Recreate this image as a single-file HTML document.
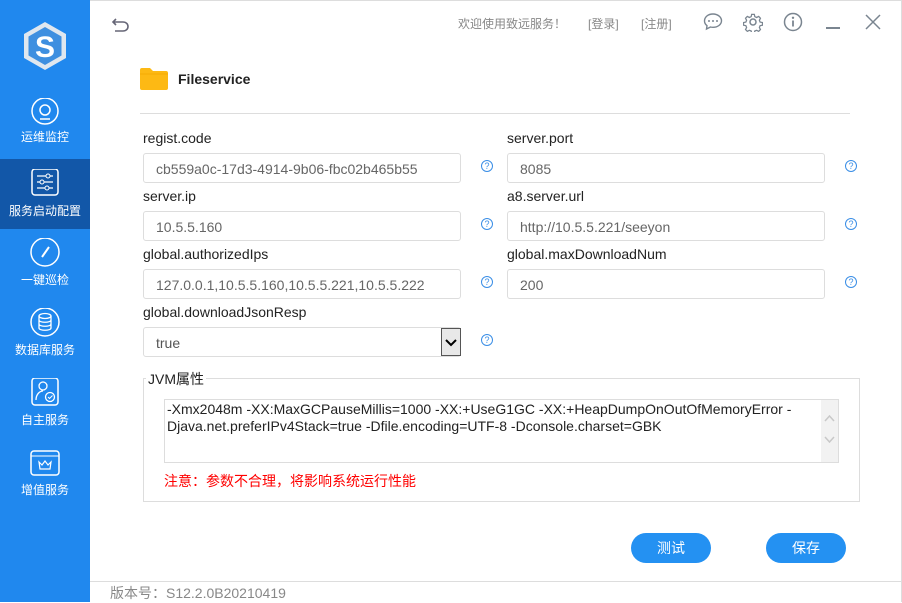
<!DOCTYPE html>
<html><head><meta charset="utf-8"><style>
*{margin:0;padding:0;box-sizing:border-box}
body{width:902px;height:602px;position:relative;background:#fff;font-family:"Liberation Sans","Noto Sans CJK SC",sans-serif;overflow:hidden}
.side{position:absolute;left:0;top:0;width:90px;height:602px;background:#2088ee}
.item{position:absolute;left:0;width:90px;height:70px;color:#fff;font-size:12px;text-align:center}
.item svg{position:absolute;left:27px;top:10px}
.item span{position:absolute;left:0;right:0;top:38px;white-space:nowrap}
.active{background:#1257a8}
.a{position:absolute}
.lbl{position:absolute;font-size:14px;color:#222}
.inp{position:absolute;height:30px;border:1px solid #ddd;border-radius:3px;font-size:14px;color:#666;padding:7px 12px;width:318px;white-space:nowrap;overflow:hidden}
.q{position:absolute;width:12px;height:12px;border:1.2px solid #3a8ee6;border-radius:50%;color:#3a8ee6;font-size:9px;line-height:10px;text-align:center}
.btn{position:absolute;width:80px;height:30px;border-radius:15px;background:#2491f2;color:#fff;font-size:14px;text-align:center;line-height:30px;top:533px}
</style></head><body>
<div class="a" style="left:90px;top:0;width:812px;height:1px;background:#ddd"></div>
<div class="a" style="left:901px;top:0;width:1px;height:602px;background:#ddd"></div>
<div class="side">
<svg class="a" style="left:22px;top:21px" width="46" height="50" viewBox="0 0 46 50"><polygon points="23,1 44,13 44,37 23,49 2,37 2,13" fill="#dfe7ef"/><polygon points="23,6 39.5,15.5 39.5,34.5 23,44 6.5,34.5 6.5,15.5" fill="#3e8fe0"/><text x="23" y="36" font-size="30" font-weight="bold" fill="#fff" text-anchor="middle" font-family="Liberation Sans">S</text></svg>
<div class="item" style="top:88px"><svg width="36" height="28" viewBox="0 0 36 28"><circle cx="18" cy="13" r="13" fill="none" stroke="#fff" stroke-width="1.5"/><circle cx="18" cy="12" r="5" fill="none" stroke="#fff" stroke-width="1.5"/><path d="M13 21h10" stroke="#fff" stroke-width="1.5"/></svg><span style="top:40px">运维监控</span></div>
<div class="item active" style="top:159px"><svg width="36" height="28" viewBox="0 0 36 28"><rect x="5" y="0" width="26" height="26" rx="3" fill="none" stroke="#fff" stroke-width="1.5"/><path d="M10 7h16M10 13h16M10 19h16" stroke="#fff" stroke-width="1.2"/><circle cx="21" cy="7" r="2" fill="#1257a8" stroke="#fff"/><circle cx="15" cy="13" r="2" fill="#1257a8" stroke="#fff"/><circle cx="20" cy="19" r="2" fill="#1257a8" stroke="#fff"/></svg><span style="top:43px">服务启动配置</span></div>
<div class="item" style="top:228px"><svg width="36" height="30" viewBox="0 0 36 30"><circle cx="18" cy="14" r="14" fill="none" stroke="#fff" stroke-width="1.5"/><path d="M15 19l7-10" stroke="#fff" stroke-width="2"/></svg><span style="top:43px">一键巡检</span></div>
<div class="item" style="top:298px"><svg width="36" height="30" viewBox="0 0 36 30"><circle cx="18" cy="14" r="14" fill="none" stroke="#fff" stroke-width="1.5"/><ellipse cx="18" cy="8" rx="6" ry="2.5" fill="none" stroke="#fff" stroke-width="1.3"/><path d="M12 8v12c0 3 12 3 12 0V8M12 12c0 3 12 3 12 0M12 16c0 3 12 3 12 0" fill="none" stroke="#fff" stroke-width="1.3"/></svg><span style="top:43px">数据库服务</span></div>
<div class="item" style="top:368px"><svg width="36" height="30" viewBox="0 0 36 30"><rect x="5" y="0" width="26" height="27" rx="3" fill="none" stroke="#fff" stroke-width="1.5"/><circle cx="16" cy="8" r="4" fill="none" stroke="#fff" stroke-width="1.3"/><path d="M9 22c0-6 4-9 7-9" fill="none" stroke="#fff" stroke-width="1.3"/><circle cx="23" cy="19" r="4.5" fill="none" stroke="#fff" stroke-width="1.3"/><path d="M21 19l1.5 1.5 3-3" fill="none" stroke="#fff"/></svg><span style="top:43px">自主服务</span></div>
<div class="item" style="top:438px"><svg width="36" height="30" viewBox="0 0 36 30"><rect x="4" y="3" width="28" height="24" rx="3" fill="none" stroke="#fff" stroke-width="1.5"/><path d="M4 8h28" stroke="#fff"/><path d="M12 14l3 3 3-4 3 4 3-3-1 7h-10z" fill="none" stroke="#fff" stroke-width="1.2"/></svg><span style="top:43px">增值服务</span></div>
</div>
<svg class="a" style="left:111px;top:17px" width="20" height="16" viewBox="0 0 20 16"><path d="M5 2L2 5l3 3M2 5h10c3 0 5 2 5 4.5S15 14 12 14H4" fill="none" stroke="#667" stroke-width="1.6"/></svg>
<div class="a" style="left:458px;top:15px;font-size:12px;color:#888">欢迎使用致远服务！</div>
<div class="a" style="left:588px;top:15px;font-size:12px;color:#888">[登录]</div>
<div class="a" style="left:641px;top:15px;font-size:12px;color:#888">[注册]</div>
<svg class="a" style="left:703px;top:13px" width="20" height="18" viewBox="0 0 20 18"><path d="M10 1C5 1 1.5 4 1.5 8c0 2 1 3.5 2.5 4.7L3.5 16l4-2c.8.2 1.6.3 2.5.3 5 0 8.5-3 8.5-6.5S15 1 10 1z" fill="none" stroke="#7a8590" stroke-width="1.4"/><circle cx="6" cy="8" r="1" fill="#7a8590"/><circle cx="10" cy="8" r="1" fill="#7a8590"/><circle cx="14" cy="8" r="1" fill="#7a8590"/></svg>
<svg class="a" style="left:743px;top:12px" width="20" height="20" viewBox="0 0 20 20"><circle cx="10" cy="10" r="3" fill="none" stroke="#7a8590" stroke-width="1.5"/><path d="M8.5 1.5h3l.5 2.5 2 1 2.3-1.2 2 2-1.2 2.3.8 2 2.6.5v3l-2.6.5-.8 2 1.2 2.3-2 2-2.3-1.2-2 .8-.5 2.6h-3l-.5-2.6-2-.8-2.3 1.2-2-2 1.2-2.3-.8-2-2.6-.5v-3l2.6-.5.8-2-1.2-2.3 2-2 2.3 1.2 2-1z" fill="none" stroke="#7a8590" stroke-width="1.4" transform="scale(.9) translate(1.1 1.1)"/></svg>
<svg class="a" style="left:783px;top:12px" width="20" height="20" viewBox="0 0 20 20"><circle cx="10" cy="10" r="8.5" fill="none" stroke="#7a8590" stroke-width="1.5"/><circle cx="10" cy="5.8" r="1.2" fill="#7a8590"/><path d="M10 8.5v6" stroke="#7a8590" stroke-width="1.8"/></svg>
<div class="a" style="left:826px;top:27px;width:14px;height:2px;background:#7a8590"></div>
<svg class="a" style="left:865px;top:14px" width="16" height="16" viewBox="0 0 16 16"><path d="M1 1l14 14M15 1L1 15" stroke="#7a8590" stroke-width="1.5"/></svg>
<svg class="a" style="left:140px;top:68px" width="28" height="22" viewBox="0 0 28 22"><path d="M0 2a2 2 0 012-2h8l3 3h13a2 2 0 012 2v15a2 2 0 01-2 2H2a2 2 0 01-2-2z" fill="#fdb914"/><path d="M0 6h28" stroke="#f2a900" stroke-width=".8"/></svg>
<div class="a" style="left:178px;top:71px;font-size:14px;font-weight:bold;color:#222">Fileservice</div>
<div class="a" style="left:140px;top:113px;width:710px;height:1px;background:#ddd"></div>

<div class="lbl" style="left:143px;top:130px">regist.code</div>
<div class="inp" style="left:143px;top:153px">cb559a0c-17d3-4914-9b06-fbc02b465b55</div>
<div class="q" style="left:481px;top:160px">?</div>
<div class="lbl" style="left:507px;top:130px">server.port</div>
<div class="inp" style="left:507px;top:153px">8085</div>
<div class="q" style="left:845px;top:160px">?</div>

<div class="lbl" style="left:143px;top:188px">server.ip</div>
<div class="inp" style="left:143px;top:211px">10.5.5.160</div>
<div class="q" style="left:481px;top:218px">?</div>
<div class="lbl" style="left:507px;top:188px">a8.server.url</div>
<div class="inp" style="left:507px;top:211px">http://10.5.5.221/seeyon</div>
<div class="q" style="left:845px;top:218px">?</div>

<div class="lbl" style="left:143px;top:246px">global.authorizedIps</div>
<div class="inp" style="left:143px;top:269px">127.0.0.1,10.5.5.160,10.5.5.221,10.5.5.222</div>
<div class="q" style="left:481px;top:276px">?</div>
<div class="lbl" style="left:507px;top:246px">global.maxDownloadNum</div>
<div class="inp" style="left:507px;top:269px">200</div>
<div class="q" style="left:845px;top:276px">?</div>

<div class="lbl" style="left:143px;top:304px">global.downloadJsonResp</div>
<div class="inp" style="left:143px;top:327px;color:#555">true</div>
<div class="a" style="left:441px;top:328px;width:20px;height:28px;border:1px solid #555;background:#e8e8e8"><svg width="18" height="26" viewBox="0 0 18 26"><path d="M4 11l5 5 5-5" fill="none" stroke="#000" stroke-width="2"/></svg></div>
<div class="q" style="left:481px;top:334px">?</div>

<div class="a" style="left:143px;top:378px;width:717px;height:124px;border:1px solid #ddd"></div>
<div class="a" style="left:146px;top:369px;background:#fff;padding:0 2px;font-size:14px;color:#222">JVM属性</div>
<div class="a" style="left:164px;top:399px;width:675px;height:64px;border:1px solid #ddd;font-size:14px;color:#222;padding:1px 26px 0 2px;line-height:17px">-Xmx2048m -XX:MaxGCPauseMillis=1000 -XX:+UseG1GC -XX:+HeapDumpOnOutOfMemoryError -Djava.net.preferIPv4Stack=true -Dfile.encoding=UTF-8 -Dconsole.charset=GBK</div>
<div class="a" style="left:821px;top:400px;width:17px;height:62px;background:#f2f2f2"><svg width="17" height="62" viewBox="0 0 17 62"><path d="M4 21l4.5-5 4.5 5M4 37l4.5 5 4.5-5" fill="none" stroke="#c8c8c8" stroke-width="1.5"/></svg></div>
<div class="a" style="left:164px;top:471px;font-size:14px;color:#f00">注意：参数不合理，将影响系统运行性能</div>

<div class="btn" style="left:631px">测试</div>
<div class="btn" style="left:766px">保存</div>
<div class="a" style="left:90px;top:581px;width:812px;height:1px;background:#ddd"></div>
<div class="a" style="left:110px;top:583px;font-size:14px;color:#888">版本号：S12.2.0B20210419</div>
</body></html>
